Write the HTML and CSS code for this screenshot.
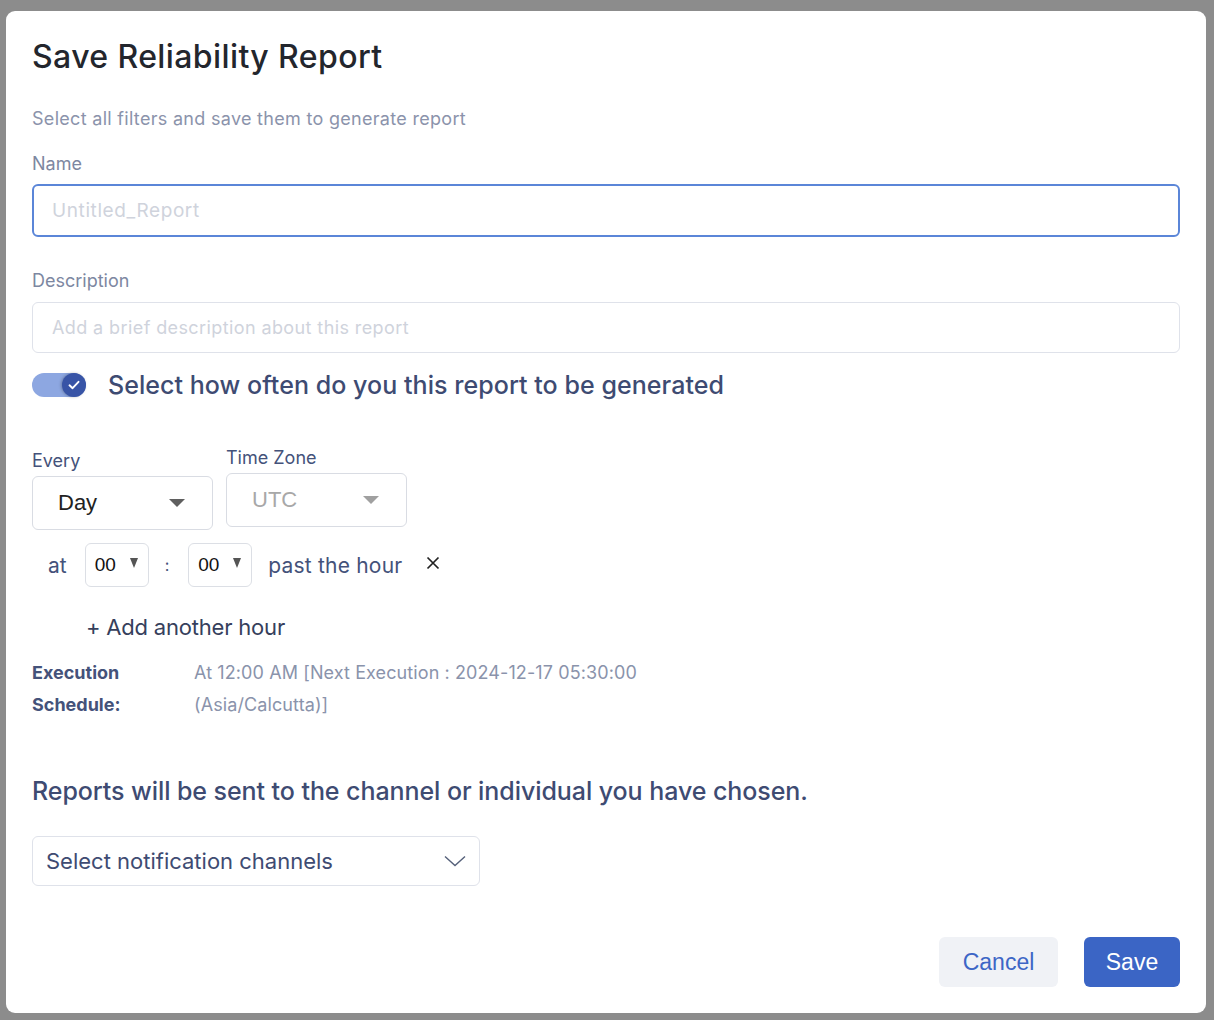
FILE: index.html
```html
<!DOCTYPE html>
<html lang="en">
<head>
	<meta charset="UTF-8">
	<title>Save Reliability Report</title>
	<link rel="stylesheet" href="styles.css">
</head>
<body>

	<div class="overlay">
		<div class="modal">
			<h1 class="title">Save Reliability Report</h1>
			<p class="subtitle">Select all filters and save them to generate report</p>

			<label class="label">Name</label>
			<div class="input focused"><span class="placeholder">Untitled_Report</span></div>

			<label class="label desc-label">Description</label>
			<div class="input"><span class="placeholder">Add a brief description about this report</span></div>

			<div class="toggle-row">
				<div class="toggle">
					<div class="knob">
						<svg width="14" height="14" viewBox="0 0 14 14"><path d="M2.5 7.3 L5.6 10.2 L11.5 3.8" fill="none" stroke="#fff" stroke-width="1.9" stroke-linecap="round" stroke-linejoin="round"/></svg>
					</div>
				</div>
				<span class="toggle-text">Select how often do you this report to be generated</span>
			</div>

			<div class="freq-row">
				<div class="field">
					<span class="small-label">Every</span>
					<div class="select">Day <span class="caret"></span></div>
				</div>
				<div class="field tz">
					<span class="small-label">Time Zone</span>
					<div class="select disabled">UTC <span class="caret"></span></div>
				</div>
			</div>

			<div class="at-row">
				<span class="at">at</span>
				<div class="mini-select first">00 <span class="mini-caret"></span></div>
				<span class="colon">:</span>
				<div class="mini-select second">00 <span class="mini-caret"></span></div>
				<span class="past">past the hour</span>
				<svg class="close" width="14" height="14" viewBox="0 0 14 14"><path d="M1.5 1.5 L12.5 12.5 M12.5 1.5 L1.5 12.5" stroke="#222" stroke-width="1.7"/></svg>
			</div>

			<div class="add-hour">+ Add another hour</div>

			<div class="schedule">
				<div class="schedule-label">Execution<br>Schedule:</div>
				<div class="schedule-value">At 12:00 AM [Next Execution : 2024-12-17 05:30:00<br>(Asia/Calcutta)]</div>
			</div>

			<p class="send-text">Reports will be sent to the channel or individual you have chosen.</p>

			<div class="channels">
				<span>Select notification channels</span>
				<svg width="22" height="12" viewBox="0 0 22 12"><path d="M1 1.5 L11 10.5 L21 1.5" fill="none" stroke="#55607a" stroke-width="1.4"/></svg>
			</div>

			<div class="actions">
				<button class="btn cancel">Cancel</button>
				<button class="btn save">Save</button>
			</div>
		</div>
	</div>

</body>
</html>
```

FILE: styles.css
```css
html, body {
	margin: 0;
	height: 100%;
}

body {
	font-family: "Inter", "Noto Sans", sans-serif;
	background: #8c8c8c;
	overflow: hidden;
}

.overlay {
	padding: 11px 8px 0 6px;
}

.modal {
	background: #fff;
	border-radius: 9px;
	height: 1002px;
	box-sizing: border-box;
	padding: 26px 26px 0 26px;
	display: flex;
	flex-direction: column;
}

.title {
	margin: 0;
	font-size: 32px;
	font-weight: 500;
	color: #23262d;
	letter-spacing: 0.4px;
	line-height: 40px;
}

.subtitle {
	margin: 30px 0 0;
	font-size: 18px;
	color: #8b93ab;
	line-height: 24px;
	letter-spacing: 0.3px;
}

.label {
	margin-top: 21px;
	font-size: 18px;
	color: #7d87a1;
	line-height: 24px;
}

.desc-label {
	margin-top: 32px;
}

.input {
	margin-top: 9px;
	height: 51px;
	box-sizing: border-box;
	border: 1px solid #dfe2ea;
	border-radius: 6px;
	display: flex;
	align-items: center;
	padding-left: 19px;
}

.input.focused {
	height: 53px;
	border: 2px solid #5b86d8;
	padding-left: 18px;
	margin-top: 8px;
}

.placeholder {
	font-size: 18px;
	color: #cfd3dc;
	letter-spacing: 0.4px;
}

.focused .placeholder {
	font-size: 19px;
	letter-spacing: 0.6px;
}

.toggle-row {
	margin-top: 17px;
	display: flex;
	align-items: center;
}

.toggle {
	width: 54px;
	height: 24px;
	border-radius: 12px;
	background: #8da7e1;
	display: flex;
	justify-content: flex-end;
}

.knob {
	width: 24px;
	height: 24px;
	border-radius: 50%;
	background: #3854a6;
	display: flex;
	align-items: center;
	justify-content: center;
	box-shadow: -1px 0 3px rgba(0, 0, 0, 0.25);
}

.toggle-text {
	margin-left: 22px;
	font-size: 25px;
	color: #3e4b72;
	font-weight: 500;
	letter-spacing: 0.05px;
}

.freq-row {
	margin-top: 50px;
	display: flex;
	gap: 13px;
}

.field {
	display: flex;
	flex-direction: column;
}

.tz {
	margin-top: -3px;
}

.small-label {
	font-size: 18px;
	color: #44527a;
	line-height: 22px;
	margin-bottom: 4px;
}

.select {
	width: 181px;
	height: 54px;
	box-sizing: border-box;
	border: 1px solid #d9dce3;
	border-radius: 6px;
	display: flex;
	align-items: center;
	justify-content: space-between;
	padding: 0 27px 0 25px;
	font-family: "Liberation Sans", Arial, sans-serif;
	font-size: 22px;
	color: #222;
}

.select.disabled {
	color: #a8a8a8;
}

.caret {
	width: 0;
	height: 0;
	border-left: 8px solid transparent;
	border-right: 8px solid transparent;
	border-top: 8px solid #5f5f5f;
}

.disabled .caret {
	border-top-color: #a0a0a0;
}

.at-row {
	margin-top: 13px;
	display: flex;
	align-items: center;
	height: 44px;
	padding-left: 16px;
}

.at {
	font-size: 21px;
	color: #44527a;
}

.mini-select {
	width: 64px;
	height: 44px;
	box-sizing: border-box;
	border: 1px solid #dcdfe5;
	border-radius: 6px;
	display: flex;
	align-items: center;
	padding-left: 9px;
	font-family: "Liberation Sans", Arial, sans-serif;
	font-size: 19px;
	color: #111;
}

.first {
	margin-left: 18px;
}

.second {
	margin-left: 19px;
}

.mini-caret {
	width: 0;
	height: 0;
	border-left: 4.5px solid transparent;
	border-right: 4.5px solid transparent;
	border-top: 10px solid #555;
	margin-left: 14px;
	margin-top: -5px;
}

.colon {
	margin-left: 16px;
	font-size: 16px;
	color: #44527a;
}

.past {
	margin-left: 16px;
	font-size: 21px;
	color: #44527a;
	letter-spacing: 0.2px;
}

.close {
	margin-left: 24px;
	margin-top: -4px;
}

.add-hour {
	margin-top: 25px;
	margin-left: 54px;
	font-size: 22px;
	color: #363f5c;
	line-height: 30px;
	letter-spacing: -0.2px;
}

.schedule {
	margin-top: 15px;
	display: flex;
	font-size: 18px;
	line-height: 32px;
}

.schedule-label {
	width: 162px;
	font-weight: 700;
	color: #44527a;
}

.schedule-value {
	color: #8a93ab;
	letter-spacing: 0.1px;
}

.send-text {
	margin: 53px 0 0;
	font-size: 25px;
	color: #3e4b72;
	font-weight: 500;
	line-height: 34px;
	letter-spacing: -0.07px;
}

.channels {
	margin-top: 28px;
	width: 448px;
	height: 50px;
	box-sizing: border-box;
	border: 1px solid #dfe2ea;
	border-radius: 6px;
	display: flex;
	align-items: center;
	justify-content: space-between;
	padding: 0 13px 0 13px;
	font-size: 22px;
	color: #3e4b72;
}

.actions {
	margin-top: auto;
	margin-bottom: 26px;
	display: flex;
	justify-content: flex-end;
	gap: 26px;
}

.btn {
	height: 50px;
	border: none;
	border-radius: 6px;
	font-family: "Liberation Sans", Arial, sans-serif;
	font-size: 23px;
	padding: 0;
}

.cancel {
	width: 119px;
	background: #f0f2f6;
	color: #3d66c6;
}

.save {
	width: 96px;
	background: #3b65c5;
	color: #fff;
}
```
